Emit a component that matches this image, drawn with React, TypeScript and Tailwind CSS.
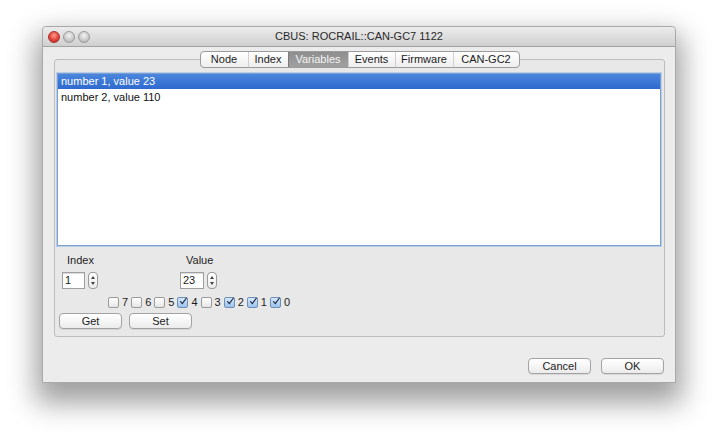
import React from "react";

const tabs = [
  { t: "Node", w: "w-[47px]" },
  { t: "Index", w: "w-[40px]" },
  { t: "Variables", w: "w-[60px]" },
  { t: "Events", w: "w-[47px]" },
  { t: "Firmware", w: "w-[58px]" },
  { t: "CAN-GC2", w: "w-[66px]" },
];
const bits = [
  { n: 7, on: false },
  { n: 6, on: false },
  { n: 5, on: false },
  { n: 4, on: true },
  { n: 3, on: false },
  { n: 2, on: true },
  { n: 1, on: true },
  { n: 0, on: true },
];

function Light({ red }: { red?: boolean }) {
  return (
    <div
      className={
        red
          ? "h-[12px] w-[12px] rounded-full border border-[#a8302c] bg-[radial-gradient(circle_at_50%_35%,#ff9a8f,#e0443a_55%,#b8251e)]"
          : "h-[12px] w-[12px] rounded-full border border-[#9c9c9c] bg-[radial-gradient(circle_at_50%_35%,#f2f2f2,#c8c8c8_60%,#a9a9a9)]"
      }
    />
  );
}

function Spinner() {
  return (
    <div className="ml-[3px] flex h-[17px] w-[10px] flex-col items-center justify-center gap-[3px] rounded-[4px] border border-[#9a9a9a] bg-gradient-to-b from-white to-[#ececec]">
      <div className="h-0 w-0 border-x-[2px] border-b-[3px] border-x-transparent border-b-[#444]" />
      <div className="h-0 w-0 border-x-[2px] border-t-[3px] border-x-transparent border-t-[#444]" />
    </div>
  );
}

function Check({ on }: { on: boolean }) {
  return (
    <div
      className={
        on
          ? "flex h-[11px] w-[11px] items-center justify-center rounded-[2px] border border-[#6f8fb8] bg-gradient-to-b from-[#d6e8fa] to-[#9cc3ec]"
          : "h-[11px] w-[11px] rounded-[2px] border border-[#9a9a9a] bg-gradient-to-b from-white to-[#e6e6e6]"
      }
    >
      {on && (
        <svg width="11" height="11" viewBox="0 0 11 11" className="-mt-[2px] ml-[1px]">
          <path d="M2 5.5 L4.5 8.5 L10 1" fill="none" stroke="#1b2a44" strokeWidth="1.6" strokeLinecap="round" strokeLinejoin="round" />
        </svg>
      )}
    </div>
  );
}

function Btn({ label, w }: { label: string; w: string }) {
  return (
    <button
      className={`${w} flex h-[16px] items-center justify-center rounded-[4px] border border-[#a3a3a3] bg-gradient-to-b from-white via-[#f6f6f6] to-[#ebebeb] text-[11px] leading-none text-[#1c1c1c] shadow-[0_1px_0_rgba(0,0,0,0.08)]`}
    >
      {label}
    </button>
  );
}

export default function App() {
  return (
    <div className="h-[443px] w-[719px] overflow-hidden bg-white pl-[42px] pt-[26px] font-['Liberation_Sans',Arial,sans-serif]">
      <div className="flex h-[357px] w-[634px] flex-col rounded-t-[4px] border border-[#a9a9a9] bg-[#ececec] shadow-[0_14px_28px_6px_rgba(0,0,0,0.38)]">
        {/* title bar */}
        <div className="grid h-[20px] grid-cols-[1fr_auto_1fr] items-center rounded-t-[4px] border-b border-[#a2a2a2] bg-gradient-to-b from-[#ececec] to-[#d0d0d0]">
          <div className="flex gap-[3px] pl-[5px]">
            <Light red />
            <Light />
            <Light />
          </div>
          <div className="text-[11px] text-[#2a2a2a]">CBUS: ROCRAIL::CAN-GC7 1122</div>
          <div />
        </div>

        {/* tab pane */}
        <div className="mx-[11px] mt-[4px] mr-[10px] flex flex-col">
          <div className="relative z-10 flex justify-center">
            <div className="flex h-[17px] overflow-hidden rounded-[4px] border border-[#9b9b9b] bg-gradient-to-b from-white to-[#eeeeee] text-[11px] text-[#1c1c1c]">
              {tabs.map((tab, i) => (
                <div
                  key={tab.t}
                  className={
                    tab.t === "Variables"
                      ? `${tab.w} flex items-center justify-center border-l border-[#7a7a7a] bg-gradient-to-b from-[#8e8e8e] to-[#a0a0a0] text-[#f4f4f4]`
                      : i === 0
                      ? `${tab.w} flex items-center justify-center`
                      : `${tab.w} flex items-center justify-center border-l border-[#d0d0d0]`
                  }
                >
                  {tab.t}
                </div>
              ))}
            </div>
          </div>
          <div className="-mt-[9px] flex flex-col rounded-[3px] border border-[#bdbdbd] bg-[#e8e8e8] pb-[7px] pl-[2px] pr-[3px] pt-[13px]">
            <div className="h-[173px] border border-[#7c9fd0] bg-white shadow-[0_0_0_1px_#b7cdea] text-[11px] text-[#111]">
              <div className="flex h-[15px] items-center bg-gradient-to-b from-[#4a86dc] to-[#2f69cf] pl-[3px] text-white">number 1, value 23</div>
              <div className="flex h-[16px] items-center pl-[3px]">number 2, value 110</div>
            </div>

            <div className="mt-[7px] flex pl-[5px] text-[11px] text-[#1c1c1c]">
              <div className="flex w-[118px] flex-col">
                <div className="pl-[5px] leading-[14px]">Index</div>
                <div className="mt-[5px] flex items-center">
                  <div className="flex h-[17px] w-[23px] items-center border border-[#9f9f9f] bg-white pl-[2px] shadow-[inset_0_1px_1px_rgba(0,0,0,0.15)]">1</div>
                  <Spinner />
                </div>
              </div>
              <div className="flex flex-col">
                <div className="pl-[6px] leading-[14px]">Value</div>
                <div className="mt-[5px] flex items-center">
                  <div className="flex h-[17px] w-[24px] items-center border border-[#9f9f9f] bg-white pl-[2px] shadow-[inset_0_1px_1px_rgba(0,0,0,0.15)]">23</div>
                  <Spinner />
                </div>
              </div>
            </div>

            <div className="mt-[7px] flex h-[12px] items-center gap-[3px] pl-[51px] text-[11px] text-[#1c1c1c]">
              {bits.map((b) => (
                <div key={b.n} className="flex items-center">
                  <Check on={b.on} />
                  <span className="ml-[3px] leading-none">{b.n}</span>
                </div>
              ))}
            </div>

            <div className="mt-[5px] flex gap-[7px] pl-[2px]">
              <Btn label="Get" w="w-[63px]" />
              <Btn label="Set" w="w-[63px]" />
            </div>
          </div>
        </div>

        {/* dialog buttons */}
        <div className="mt-[21px] flex justify-end gap-[10px] pr-[11px]">
          <Btn label="Cancel" w="w-[63px]" />
          <Btn label="OK" w="w-[63px]" />
        </div>
      </div>
    </div>
  );
}
